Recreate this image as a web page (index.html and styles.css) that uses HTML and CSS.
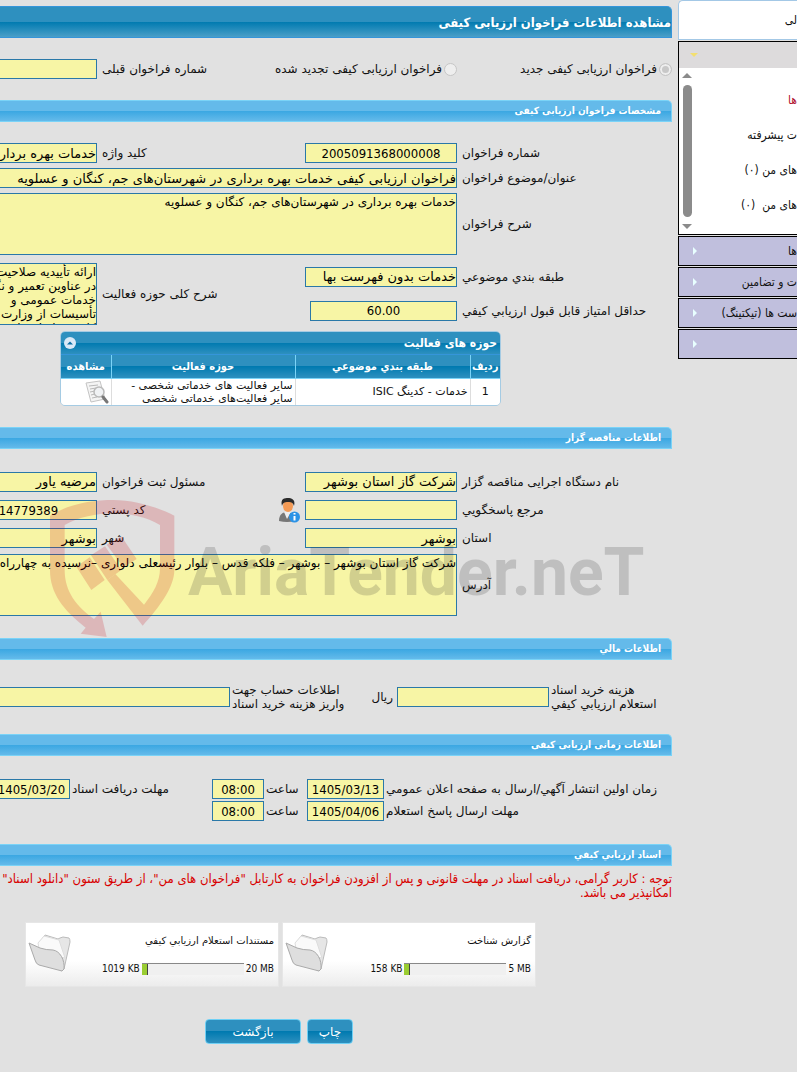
FILE: index.html
```html
<!DOCTYPE html>
<html lang="fa">
<head>
    <meta charset="UTF-8">
    <meta name="viewport" content="width=device-width, initial-scale=1.0">
    <title>مشاهده اطلاعات فراخوان ارزیابی کیفی</title>
    <link rel="stylesheet" href="styles.css">
</head>
<body>
    <div class="page">
        <main class="content" dir="rtl">
            <h1 class="page-title">مشاهده اطلاعات فراخوان ارزیابی کیفی</h1>

            <div class="form-grid type-row">
                <div class="radio"><input type="radio" name="type" id="typeNew" checked disabled><label for="typeNew">فراخوان ارزیابی کیفی جدید</label></div>
                <div class="radio"><input type="radio" name="type" id="typeRenew" disabled><label for="typeRenew">فراخوان ارزیابی کیفی تجدید شده</label></div>
                <label for="prevNumber">شماره فراخوان قبلی</label>
                <input type="text" id="prevNumber" readonly>
            </div>

            <h2 class="section-title">مشخصات فراخوان ارزیابی کیفی</h2>
            <div class="form-grid details">
                <label for="number">شماره فراخوان</label>
                <input class="center" type="text" id="number" value="2005091368000008" readonly>
                <label for="keyword">کلید واژه</label>
                <input type="text" id="keyword" value="خدمات بهره برداری در شهرستان" readonly>

                <label for="subject">عنوان/موضوع فراخوان</label>
                <input class="wide" type="text" id="subject" value="فراخوان ارزیابی کیفی خدمات بهره برداری در شهرستان‌های جم، کنگان و عسلویه" readonly>

                <label for="description">شرح فراخوان</label>
                <textarea class="wide" id="description" readonly>خدمات بهره برداری در شهرستان‌های جم، کنگان و عسلویه</textarea>
            </div>
            <div class="form-grid category">
                <label for="category">طبقه بندي موضوعي</label>
                <input type="text" id="category" value="خدمات بدون فهرست بها" readonly>
                <label class="tall" for="scope">شرح کلی حوزه فعالیت</label>
                <textarea class="tall" id="scope" readonly>ارائه تأییدیه صلاحیت ایمنی
در عناوین تعمیر و نگهداری
خدمات عمومی و
تأسیسات از وزارت تعاون
کار و رفاه اجتماعی</textarea>
                <label for="minScore">حداقل امتیاز قابل قبول ارزیابي کیفي</label>
                <input class="center score" type="text" id="minScore" value="60.00" readonly>
            </div>

            <section class="activity">
                <header class="activity-head">
                    <h3>حوزه های فعالیت</h3>
                    <button class="collapse" type="button" aria-label="بستن">
                        <svg viewBox="0 0 12 12" width="12" height="12"><circle cx="6" cy="6" r="6" fill="#d9e9f7"/><path d="M3 7.5 6 4.5 9 7.5Z" fill="#0b6fa5"/></svg>
                    </button>
                </header>
                <table>
                    <thead>
                        <tr>
                            <th class="col-row">ردیف</th>
                            <th class="col-category">طبقه بندي موضوعي</th>
                            <th>حوزه فعالیت</th>
                            <th class="col-view">مشاهده</th>
                        </tr>
                    </thead>
                    <tbody>
                        <tr>
                            <td class="center">1</td>
                            <td>خدمات - کدینگ ISIC</td>
                            <td>سایر فعالیت های خدماتی شخصی -<br>سایر فعالیت‌های خدماتی شخصی</td>
                            <td>
                                <button class="icon-btn" type="button" aria-label="مشاهده">
                                    <svg viewBox="0 0 24 24" width="24" height="24">
                                        <path d="M1 3 15 1 20 19 6 22Z" fill="#f4f4f4" stroke="#c4c4c4"/>
                                        <path d="M4 6 13 5M5 9 11 8M5 12 10 11M6 15 10 14M7 18 12 17" stroke="#b9b9b9" fill="none"/>
                                        <circle cx="14" cy="12" r="5" fill="#f0f2f4" stroke="#b9b9b9" stroke-width="1.5"/>
                                        <path d="M18 17 22 22" stroke="#777" stroke-width="3" stroke-linecap="round"/>
                                    </svg>
                                </button>
                            </td>
                        </tr>
                    </tbody>
                </table>
            </section>

            <h2 class="section-title">اطلاعات مناقصه گزار</h2>
            <div class="form-grid owner">
                <label for="agency">نام دستگاه اجرایی مناقصه گزار</label>
                <input type="text" id="agency" value="شرکت گاز استان بوشهر" readonly>
                <label for="registrar">مسئول ثبت فراخوان</label>
                <input type="text" id="registrar" value="مرضیه یاور" readonly>

                <label for="contact">مرجع پاسخگویي</label>
                <input type="text" id="contact" readonly>
                <div class="postal">
                    <button class="icon-btn" type="button" aria-label="اطلاعات تماس">
                        <svg viewBox="0 0 24 26" width="24" height="26">
                            <path d="M3 24C3 17 7 15 11 15s8 2 8 9Q11 26 3 24Z" fill="#777"/>
                            <path d="M8 15 11 22 15 15Z" fill="#eee"/>
                            <ellipse cx="12" cy="9" rx="5" ry="6" fill="#f39a55"/>
                            <path d="M6 9C4 1 9 1 12 1s8 1 6 8C17 6 16 5 12 5S7 6 6 9Z" fill="#2b2b2b"/>
                            <circle cx="18.500" cy="20" r="5.500" fill="#2c93e6"/>
                            <path d="M18.500 16v1.500M18.500 19v4.500" stroke="#fff" stroke-width="2"/>
                        </svg>
                    </button>
                    <label for="postal">کد پستي</label>
                </div>
                <input class="center" type="text" id="postal" value="7514779389" readonly>

                <label for="province">استان</label>
                <input type="text" id="province" value="بوشهر" readonly>
                <label for="city">شهر</label>
                <input type="text" id="city" value="بوشهر" readonly>

                <label for="address">آدرس</label>
                <textarea class="wide" id="address" readonly>شرکت گاز استان بوشهر – بوشهر – فلکه قدس – بلوار رئیسعلی دلواری –نرسیده به چهارراه</textarea>
            </div>

            <h2 class="section-title">اطلاعات مالي</h2>
            <div class="finance">
                <label for="price">هزینه خرید اسناد<br>استعلام ارزیابي کیفي</label>
                <input type="text" id="price" readonly>
                <div class="account">
                    <span>ریال</span>
                    <label for="account">اطلاعات حساب جهت<br>واریز هزینه خرید اسناد</label>
                </div>
                <input type="text" id="account" readonly>
            </div>

            <h2 class="section-title">اطلاعات زمانی ارزیابی کیفی</h2>
            <div class="times">
                <label for="publishDate">زمان اولین انتشار آگهي/ارسال به صفحه اعلان عمومي</label>
                <input class="center" type="text" id="publishDate" value="1405/03/13" readonly>
                <label for="publishTime">ساعت</label>
                <input class="center" type="text" id="publishTime" value="08:00" readonly>
                <label for="receiveDate">مهلت دریافت اسناد</label>
                <input class="center" type="text" id="receiveDate" value="1405/03/20" readonly>

                <label for="replyDate">مهلت ارسال پاسخ استعلام</label>
                <input class="center" type="text" id="replyDate" value="1405/04/06" readonly>
                <label for="replyTime">ساعت</label>
                <input class="center" type="text" id="replyTime" value="08:00" readonly>
            </div>

            <h2 class="section-title">اسناد ارزیابي کیفي</h2>
            <p class="notice">توجه : کاربر گرامی، دریافت اسناد در مهلت قانونی و پس از افزودن فراخوان به کارتابل "فراخوان های من"، از طریق ستون "دانلود اسناد" م<br>امکانپذیر می باشد.</p>

            <div class="files">
                <article class="file">
                    <h4>گزارش شناخت</h4>
                    <div class="usage"><span dir="ltr">5 MB</span><div class="bar"><div class="fill" style="width: 5%"></div></div><span dir="ltr">158 KB</span></div>
                    <svg class="folder" viewBox="0 0 44 40" width="44" height="40">
                        <path d="M12 8 17 1 30 5 32 4 35 3 41 4Q42 5 42 8L36 35 34 37 12 24Z" fill="#e6e6e6" stroke="#bbb"/>
                        <path d="M10 9 16 2 31 6 37 24 12 20Z" fill="#fafafa" stroke="#ddd"/>
                        <path d="M1 9 12 14Q18 16 25 16C32 17 37 26 36 35L34 37 11 31Q8 30 7 26Z" fill="#dedede" stroke="#aaa"/>
                    </svg>
                </article>
                <article class="file">
                    <h4>مستندات استعلام ارزیابي کیفي</h4>
                    <div class="usage"><span dir="ltr">20 MB</span><div class="bar"><div class="fill" style="width: 6%"></div></div><span dir="ltr">1019 KB</span></div>
                    <svg class="folder" viewBox="0 0 44 40" width="44" height="40">
                        <path d="M12 8 17 1 30 5 32 4 35 3 41 4Q42 5 42 8L36 35 34 37 12 24Z" fill="#e6e6e6" stroke="#bbb"/>
                        <path d="M10 9 16 2 31 6 37 24 12 20Z" fill="#fafafa" stroke="#ddd"/>
                        <path d="M1 9 12 14Q18 16 25 16C32 17 37 26 36 35L34 37 11 31Q8 30 7 26Z" fill="#dedede" stroke="#aaa"/>
                    </svg>
                </article>
            </div>

            <div class="actions">
                <button class="btn" type="button">چاپ</button>
                <button class="btn btn-back" type="button">بازگشت</button>
            </div>
        </main>

        <aside class="sidebar" dir="rtl">
            <a class="side-top" href="#">لی</a>
            <div class="side-panel">
                <div class="side-head"><i class="arrow-down"></i></div>
                <div class="side-body">
                    <ul>
                        <li><a class="current" href="#">ها</a></li>
                        <li><a href="#">ت پیشرفته</a></li>
                        <li><a href="#">های من (۰)</a></li>
                        <li><a href="#">های من &nbsp;(۰)</a></li>
                    </ul>
                    <div class="scroll"><i class="up"></i><i class="thumb"></i><i class="down"></i></div>
                </div>
            </div>
            <a class="side-item" href="#">ها</a>
            <a class="side-item" href="#">ت و تضامین</a>
            <a class="side-item" href="#">ست ها (تیکتینگ)</a>
            <a class="side-item" href="#" aria-label="منو"></a>
        </aside>

        <div class="watermark" aria-hidden="true">
            <svg viewBox="144 114 384 420" width="128" height="140">
                <path d="M150 167C210 130 280 120 340 120C400 120 470 140 523 167V330C523 380 480 440 428 497L322 360L346 342L432 434C460 400 480 365 480 325V195C440 172 390 160 340 160C290 160 235 172 194 195V330C194 380 215 430 282 477L302 455L320 531L242 521L257 503C190 450 150 400 150 330Z" fill="#c8000c"/>
                <path d="M229 320 269 292 314 360 274 390ZM273 286 315 259 364 330 322 360ZM320 254 364 229 410 297 370 322Z" fill="#c8000c"/>
            </svg>
            <span>AriaTender.neT</span>
        </div>
    </div>
</body>
</html>
```
FILE: styles.css
```css
* {
    box-sizing: border-box;
    margin: 0;
    padding: 0;
}
body {
    font-family: "DejaVu Sans", sans-serif;
    font-size: 12px;
    line-height: 14px;
    background: #e1e1e1;
    color: #111;
}
.page {
    position: relative;
    display: flex;
    gap: 6px;
    min-height: 100vh;
    overflow: hidden;
}
.content {
    flex: 1;
    min-width: 0;
    padding-top: 6px;
}
h1,
h2,
h3,
th,
.notice,
.usage,
.sidebar {
    font-family: "DejaVu Sans Condensed", "DejaVu Sans", sans-serif;
}
.page-title {
    height: 32px;
    border: 1px solid #3595da;
    border-width: 1px 1px 1px 0;
    border-radius: 0 5px 0 0;
    background: linear-gradient(#2e90bf 50%, #007ab0 50%, #4a9fc8);
    color: #fff;
    font-size: 13px;
    line-height: 32px;
}
.section-title {
    height: 22px;
    padding-right: 10px;
    border: 1px solid #7ad3f7;
    border-left: 0;
    border-radius: 0 5px 0 0;
    background: linear-gradient(#64baea 50%, #3aa7e2 50%, #64baea);
    color: #fff;
    font-size: 10px;
    line-height: 20px;
}
input[type="text"],
textarea {
    width: 100%;
    height: 20px;
    border: 1px solid #2a78a8;
    background: #f7f5a5;
    color: #000;
    font-family: "DejaVu Sans", sans-serif;
    font-size: 13px;
    outline: none;
}
textarea {
    display: block;
    height: 62px;
    padding-top: 1px;
    font-size: 12px;
    line-height: 14px;
    white-space: pre;
    overflow: hidden;
    resize: none;
}
input[type="text"].center {
    font-family: "DejaVu Sans Condensed", "DejaVu Sans", sans-serif;
    text-align: center;
}
label {
    text-align: left;
    white-space: nowrap;
}

/* labels hug the left side of their column, next to the field */
.form-grid {
    display: grid;
    grid-template-columns: 210px 152px 198px 152px;
    gap: 5px;
    align-items: center;
}
.type-row {
    height: 62px;
}
.radio {
    display: flex;
    align-items: center;
    gap: 2px;
    white-space: nowrap;
}
.radio input {
    appearance: none;
    width: 13px;
    height: 13px;
    flex: none;
    border: 1px solid #c6c6c6;
    border-radius: 50%;
    background: #eee;
}
.radio input:checked {
    background: #c8c8c8;
    box-shadow: inset 0 0 0 2px #eee;
}
.details {
    padding-top: 21px;
}
.wide {
    grid-column: 2 / -1;
}
.category {
    padding-top: 7px;
    grid-template-rows: 29px 29px;
}
.category .tall {
    grid-row: 1 / 3;
}
label.tall {
    grid-column: 3;
}
textarea.tall {
    grid-column: 4;
}
input[type="text"].score {
    width: 147px;
}

.activity {
    width: 441px;
    margin: 6px 171px 21px 0;
    border: 1px solid #a5cbe3;
    border-radius: 5px;
    overflow: hidden;
}
.activity-head {
    display: flex;
    justify-content: space-between;
    align-items: center;
    height: 23px;
    padding: 0 3px;
    border-bottom: 1px solid #3595da;
    background: linear-gradient(#2e90bf 50%, #007ab0 50%, #2e90bf);
    color: #fff;
}
.activity-head h3 {
    font-size: 12px;
}
.collapse,
.icon-btn {
    display: block;
    border: 0;
    background: none;
    line-height: 0;
}
table {
    width: 100%;
    table-layout: fixed;
    border-collapse: collapse;
    background: #fff;
    font-size: 11px;
    line-height: 13px;
}
th {
    height: 23px;
    background: linear-gradient(#2e90bf 50%, #007ab0 50%, #2e90bf);
    border-left: 1px solid #7ad3f7;
    border-bottom: 1px solid #7ad3f7;
    color: #fff;
}
td {
    height: 27px;
    padding: 0 2px;
    border-left: 1px solid #ddd;
    white-space: nowrap;
}
td.center {
    text-align: center;
}
th:last-child,
td:last-child {
    border-left: 0;
}
.col-row {
    width: 30px;
}
.col-category {
    width: 175px;
}
.col-view {
    width: 50px;
}

.owner {
    padding: 21px 0 22px;
    grid-template-rows: 23px 24px 22px;
}
.postal {
    display: flex;
    justify-content: space-between;
    align-items: center;
}

.finance {
    display: grid;
    grid-template-columns: 121px 152px 163px minmax(232px, 1fr);
    gap: 2px;
    align-items: center;
    padding: 23px 0;
}
.account {
    display: flex;
    justify-content: space-between;
    align-items: center;
    padding-right: 2px;
}
.times {
    display: grid;
    grid-template-columns: 286px 77px 39px 52px 138px 77px;
    gap: 2px;
    align-items: center;
    padding: 23px 0;
}
.notice {
    padding: 6px 0 0;
    color: #d80000;
    font-size: 13px;
    white-space: nowrap;
}
.files {
    display: flex;
    gap: 3px;
    margin: 22px 136px 0 0;
}
.file {
    display: grid;
    grid-template-columns: 1fr 48px;
    width: 254px;
    height: 65px;
    padding: 11px 4px 5px 0;
    border: 1px solid #e6e6e6;
    background: linear-gradient(#fff 60%, #ececec);
    font-size: 10px;
}
.file h4 {
    grid-column: 1;
    font-size: 10px;
    font-weight: normal;
}
.usage {
    display: flex;
    align-items: center;
    gap: 2px;
}
.bar {
    width: 102px;
    height: 12px;
    border-top: 1px solid #888;
    background: #f0f0f0;
    direction: ltr;
}
.fill {
    height: 100%;
    border-right: 1px solid #444;
    background: #9acd32;
}
.folder {
    grid-column: 2;
    grid-row: 1 / 3;
    justify-self: center;
}
.actions {
    display: flex;
    gap: 6px;
    margin: 32px 319px 15px 0;
}
.btn {
    width: 46px;
    height: 25px;
    border: 1px solid #6fd0f5;
    border-radius: 4px;
    background: linear-gradient(#2e90bf 50%, #007ab0 50%, #2e90bf);
    color: #fff;
    font-family: inherit;
    font-size: 12px;
}
.btn-back {
    width: 96px;
}

.sidebar {
    width: 119px;
    flex: none;
}
.sidebar a {
    color: #111;
    text-decoration: none;
    white-space: nowrap;
}
.sidebar .side-top {
    display: block;
    height: 40px;
    border: 1px solid #a3c8e6;
    border-right: 0;
    border-radius: 5px 0 0 0;
    background: #fff;
    line-height: 38px;
}
.side-panel {
    margin-top: 1px;
    border: 1px solid #000;
    border-right: 0;
    background: #fff;
}
.side-head {
    display: flex;
    justify-content: flex-end;
    align-items: center;
    height: 26px;
    padding-left: 11px;
    background: #dddbdc;
}
.arrow-down,
.up,
.down {
    border: 4px solid transparent;
    border-top-color: #f3df70;
    border-bottom: 0;
}
.side-body {
    display: flex;
    justify-content: space-between;
    height: 166px;
    padding: 5px 0 5px 3px;
}
.side-body ul {
    list-style: none;
    padding-top: 10px;
}
.side-body li {
    height: 35px;
    line-height: 35px;
}
.sidebar .current {
    color: #b01030;
}
.scroll {
    display: flex;
    flex-direction: column;
    align-items: center;
    gap: 7px;
}
.up {
    border: 5px solid transparent;
    border-top: 0;
    border-bottom-color: #8b8b8b;
}
.down {
    border-width: 5px 5px 0;
    border-top-color: #8b8b8b;
}
.thumb {
    flex: 1;
    width: 9px;
    border-radius: 5px;
    background: #8b8b8b;
}
.side-item {
    display: flex;
    justify-content: space-between;
    align-items: center;
    height: 30px;
    margin-top: 1px;
    border: 1px solid #000;
    border-right: 0;
    padding-left: 14px;
    background: #c0bfdd;
}
.side-item::after {
    content: "";
    margin-right: auto;
    border: 4px solid transparent;
    border-left-color: #e8ffff;
    border-right: 0;
}

/* site mark laid over the form */
.watermark {
    position: absolute;
    top: 498px;
    left: 48px;
    display: flex;
    align-items: center;
    gap: 12px;
    opacity: 0.18;
    pointer-events: none;
}
.watermark span {
    padding-top: 10px;
    color: #2a2a2a;
    font-family: Roboto, sans-serif;
    font-size: 66px;
    font-weight: 700;
    line-height: 80px;
}
```
